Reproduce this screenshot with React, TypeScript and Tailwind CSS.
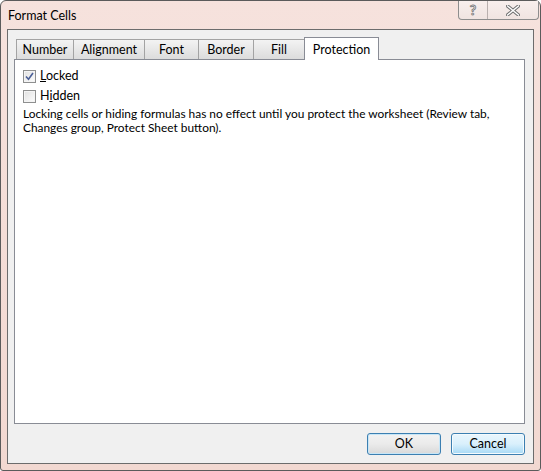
const tabs = [
  { label: "Number", w: "w-[58px]" },
  { label: "Alignment", w: "w-[72px]" },
  { label: "Font", w: "w-[55px]" },
  { label: "Border", w: "w-[56px]" },
  { label: "Fill", w: "w-[52px]" },
];

const Checkbox = ({ checked }: { checked?: boolean }) => (
  <span className="w-[13px] h-[13px] border border-[#8e8f8f] bg-gradient-to-br from-[#dcdcdc] to-[#fbfbfb] flex items-center justify-center">
    <span className="w-[11px] h-[11px] border border-[#f4f4f4] bg-gradient-to-br from-[#e3e3e3] to-[#fafafa] flex items-center justify-center">
      {checked && (
        <svg width="9" height="9" viewBox="0 0 9 9">
          <path d="M1 4.5 L3.5 7.2 L8 1" fill="none" stroke="#4a5f97" strokeWidth="1.6" />
        </svg>
      )}
    </span>
  </span>
);

export default function App() {
  return (
    <div className="w-[541px] h-[471px] bg-gradient-to-b from-[#f6e2dd] to-[#f2d8d1] border border-[#5b5b5b] rounded-t-[6px] rounded-b-[3px] flex flex-col text-[12.5px] text-black font-['Segoe_UI','Lato',sans-serif]">
      {/* title bar */}
      <div className="h-[28px] flex items-start justify-between pl-[7px] pr-[1px]">
        <span className="mt-[6px]">Format Cells</span>
        <div className="flex h-[19px] border border-t-0 border-[#8d8d8d] rounded-b-[4px] bg-gradient-to-b from-[#f8efed] to-[#f0e4e1] overflow-hidden">
          <div className="w-[29px] flex items-center justify-center border-r border-[#b9b0ae]">
            <span className="text-[14px] font-bold text-white leading-none [-webkit-text-stroke:0.8px_#6f6f6f]">?</span>
          </div>
          <div className="w-[50px] flex items-center justify-center">
            <svg width="14" height="11" viewBox="0 0 14 11">
              <path d="M1.5 1 L12.5 10 M12.5 1 L1.5 10" stroke="#6f6f6f" strokeWidth="3.4" strokeLinecap="square" />
              <path d="M1.5 1 L12.5 10 M12.5 1 L1.5 10" stroke="#ffffff" strokeWidth="1.4" strokeLinecap="square" />
            </svg>
          </div>
        </div>
      </div>

      {/* client area */}
      <div className="mx-[6px] h-[435px] border border-[#6c6c6c] bg-[#f0f0f0] flex flex-col pt-[7px] pl-[6px] pr-[8px]">
        <div className="flex items-end h-[22px] pl-[2px] relative z-10">
          {tabs.map((t, i) => (
            <div
              key={t.label}
              className={`${t.w} ${i > 0 ? "-ml-px" : ""} h-[20px] border border-b-0 border-[#a3a3a3] bg-gradient-to-b from-[#f3f3f3] to-[#dcdcdc] flex items-center justify-center pt-[1px]`}
            >
              {t.label}
            </div>
          ))}
          <div className="w-[75px] -ml-px h-[23px] -mb-px border border-b-0 border-[#898c95] bg-white flex items-start justify-center pt-[3px]">
            Protection
          </div>
        </div>

        <div className="h-[365px] border border-[#898c95] bg-white pt-[10px] pl-[8px] pr-[8px]">
          <label className="flex items-center gap-[4px] h-[13px]">
            <Checkbox checked />
            <span>
              <span className="underline">L</span>ocked
            </span>
          </label>
          <label className="flex items-center gap-[4px] h-[13px] mt-[7px]">
            <Checkbox />
            <span>
              H<span className="underline">i</span>dden
            </span>
          </label>
          <p className="mt-[4px] leading-[14px] whitespace-nowrap text-[11.9px]">
            Locking cells or hiding formulas has no effect until you protect the worksheet (Review tab,
            <br />
            Changes group, Protect Sheet button).
          </p>
        </div>

        <div className="flex justify-end gap-[10px] mt-[9px]">
          <button className="w-[74px] h-[22px] rounded-[3px] border border-[#3c7fb1] bg-gradient-to-b from-[#f2f2f2] via-[#ebebeb] to-[#d9d9d9] shadow-[inset_0_0_0_1px_#c7e6f7]">
            OK
          </button>
          <button className="w-[74px] h-[22px] rounded-[3px] border border-[#3c7fb1] bg-gradient-to-b from-[#eaf6fd] via-[#d9f0fc] to-[#a7d9f5] shadow-[inset_0_0_0_1px_#f4fbfe]">
            Cancel
          </button>
        </div>
      </div>
    </div>
  );
}
